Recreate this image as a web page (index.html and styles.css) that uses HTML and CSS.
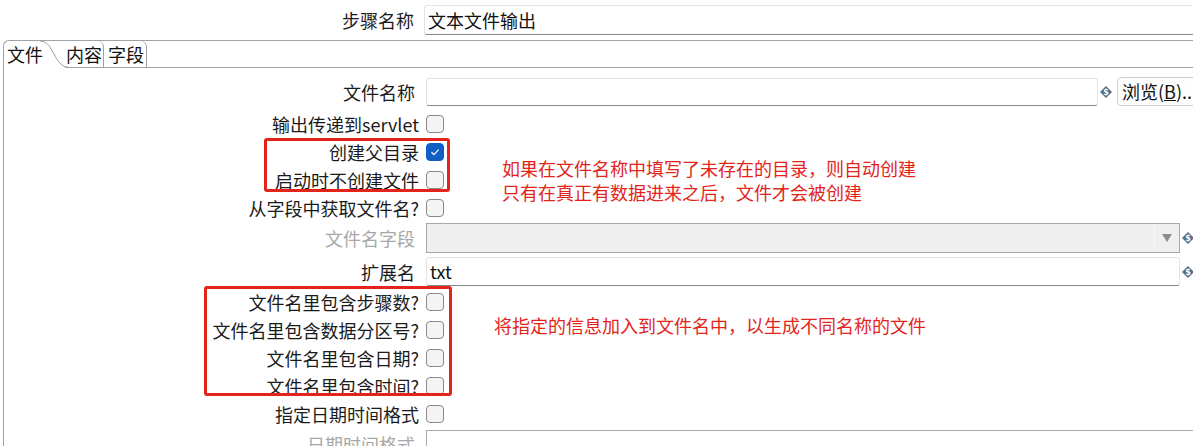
FILE: index.html
```html
<!DOCTYPE html>
<html lang="zh-CN">
<head>
    <meta charset="UTF-8">
    <title>文本文件输出</title>
    <link rel="stylesheet" href="styles.css">
</head>
<body>
    <div class="page">
        <div class="step-row">
            <div class="step-label">步骤名称</div>
            <div class="field step-field">文本文件输出</div>
        </div>

        <div class="panel">
            <div class="tabs">
                <div class="tab-active">文件</div>
                <svg class="tab-curve" width="30" height="27" viewBox="0 0 30 27">
                    <path d="M0 0 C8 0 11 8 14 13 C17 19 21 26.5 30 26.5" fill="none" stroke="#9c9c9c" stroke-width="1"/>
                </svg>
                <div class="tab tab-content">内容</div>
                <div class="tab tab-fields">字段</div>
                <div class="tab-fill"></div>
            </div>

            <div class="form">
                <div class="row row-file">
                    <div class="label label-field">文件名称</div>
                    <div class="control">
                        <div class="field grow"></div>
                        <svg class="var-icon" width="12" height="12" viewBox="0 0 12 12"><path d="M6 0 L12 6 L6 12 L0 6 Z" fill="#4d7190"/><text x="6" y="9" font-size="8" text-anchor="middle" fill="#fff">$</text></svg>
                        <div class="btn">浏览(<u>B</u>)...</div>
                    </div>
                </div>

                <div class="row row-servlet">
                    <div class="label">输出传递到servlet</div>
                    <div class="check"></div>
                </div>

                <!-- 创建目录 -->
                <div class="group">
                    <div class="group-rows">
                        <div class="row">
                            <div class="label">创建父目录</div>
                            <div class="check check-on">
                                <svg width="16" height="16" viewBox="0 0 16 16"><path d="M4.5 8.2 L7 10.6 L11.6 5.6" fill="none" stroke="#fff" stroke-width="1.2"/></svg>
                            </div>
                        </div>
                        <div class="row">
                            <div class="label">启动时不创建文件</div>
                            <div class="check"></div>
                        </div>
                    </div>
                    <div class="note note-create">如果在文件名称中填写了未存在的目录，则自动创建<br>只有在真正有数据进来之后，文件才会被创建</div>
                    <div class="mark mark-create"></div>
                </div>

                <div class="row">
                    <div class="label">从字段中获取文件名?</div>
                    <div class="check"></div>
                </div>

                <div class="row row-combo">
                    <div class="label label-field label-off">文件名字段</div>
                    <div class="control">
                        <div class="combo grow">
                            <div class="combo-arrow">
                                <svg width="10" height="8" viewBox="0 0 10 8"><path d="M0 0 L10 0 L5 8 Z" fill="#8c8c8c"/></svg>
                            </div>
                        </div>
                        <svg class="var-icon" width="12" height="12" viewBox="0 0 12 12"><path d="M6 0 L12 6 L6 12 L0 6 Z" fill="#4d7190"/><text x="6" y="9" font-size="8" text-anchor="middle" fill="#fff">$</text></svg>
                    </div>
                </div>

                <div class="row row-ext">
                    <div class="label label-field">扩展名</div>
                    <div class="control">
                        <div class="field grow">txt</div>
                        <svg class="var-icon" width="12" height="12" viewBox="0 0 12 12"><path d="M6 0 L12 6 L6 12 L0 6 Z" fill="#4d7190"/><text x="6" y="9" font-size="8" text-anchor="middle" fill="#fff">$</text></svg>
                    </div>
                </div>

                <!-- 文件名附加信息 -->
                <div class="group group-name">
                    <div class="group-rows">
                        <div class="row">
                            <div class="label">文件名里包含步骤数?</div>
                            <div class="check"></div>
                        </div>
                        <div class="row">
                            <div class="label">文件名里包含数据分区号?</div>
                            <div class="check"></div>
                        </div>
                        <div class="row">
                            <div class="label">文件名里包含日期?</div>
                            <div class="check"></div>
                        </div>
                        <div class="row">
                            <div class="label">文件名里包含时间?</div>
                            <div class="check"></div>
                        </div>
                    </div>
                    <div class="note note-name">将指定的信息加入到文件名中，以生成不同名称的文件</div>
                    <div class="mark mark-name"></div>
                </div>

                <div class="row">
                    <div class="label">指定日期时间格式</div>
                    <div class="check"></div>
                </div>

                <div class="row row-last">
                    <div class="label label-field label-off">日期时间格式</div>
                    <div class="control">
                        <div class="field field-off grow"></div>
                    </div>
                </div>
            </div>
        </div>
    </div>
</body>
</html>
```

FILE: styles.css
```css
html, body {
    margin: 0;
    background: #fff;
    overflow: hidden;
}
body {
    font-family: "Noto Sans CJK SC", "Noto Sans", sans-serif;
    font-size: 18px;
    color: #1b1b1b;
}
.page {
    width: 1210px;
}
.step-row {
    display: grid;
    grid-template-columns: 414px 1fr;
    column-gap: 10px;
    align-items: center;
    padding-top: 5px;
    height: 30px;
}
.step-label {
    text-align: right;
    line-height: 30px;
}
.field {
    box-sizing: border-box;
    height: 28px;
    border: 1px solid #e4e4e4;
    border-bottom-color: #888;
    border-radius: 3px;
    padding: 0 3px;
    line-height: 26px;
    background: #fff;
    color: #111;
}
.step-field {
    height: 30px;
    line-height: 28px;
}
.field-off {
    border-color: #ababab;
    border-radius: 0;
}
.panel {
    margin: 5px 0 0 3px;
    border-top: 1px solid #a2a2a2;
    border-left: 1px solid #a2a2a2;
    border-top-left-radius: 6px;
}
.tabs {
    display: flex;
    height: 27px;
}
.tab-active {
    padding-left: 3px;
    line-height: 26px;
    color: #111;
}
.tab-curve {
    flex: none;
    margin-left: -3px;
    overflow: visible;
}
.tab {
    line-height: 26px;
    border-right: 1px solid #a2a2a2;
    border-bottom: 1px solid #a2a2a2;
    border-top-right-radius: 6px;
    color: #111;
}
.tab-content {
    margin-left: -5px;
    padding: 0 1px;
}
.tab-fields {
    padding: 0 2px 0 4px;
}
.tab-fill {
    flex: 1;
    border-bottom: 1px solid #a2a2a2;
}
.form {
    padding-top: 9px;
}
.row {
    display: grid;
    grid-template-columns: 415px 773px;
    column-gap: 7px;
    align-items: center;
    height: 28px;
}
.label {
    text-align: right;
    line-height: 28px;
    white-space: nowrap;
}
.label-field {
    padding-right: 4px;
}
.label-off {
    color: #a8a8a8;
}
.control {
    display: flex;
    align-items: center;
}
.grow {
    flex: 1;
}
.row-servlet {
    margin-top: 5px;
}
.row-combo {
    height: 30px;
    margin-top: 1px;
}
.row-ext {
    height: 29px;
    margin-top: 4px;
}
.row-ext .field {
    height: 29px;
    line-height: 27px;
}
.row-last {
    margin-top: 2px;
}
.check {
    box-sizing: border-box;
    width: 18px;
    height: 18px;
    border: 1px solid #8a8a8a;
    border-radius: 4px;
    background: #f4f4f4;
}
.check-on {
    background: #0f5fc6;
    border-color: #0f5fc6;
}
.check-on svg {
    display: block;
    margin: 0;
}
.var-icon {
    flex: none;
    margin: 0 5px 0 2px;
}
.var-icon text {
    font-family: "DejaVu Sans", sans-serif;
    font-weight: bold;
}
.btn {
    box-sizing: border-box;
    width: 82px;
    height: 29px;
    border: 1px solid #d0d0d0;
    border-radius: 4px;
    background: #fdfdfd;
    padding-left: 4px;
    line-height: 27px;
    white-space: nowrap;
    overflow: hidden;
    color: #111;
}
.combo {
    box-sizing: border-box;
    height: 30px;
    border: 1px solid #a8a8a8;
    background: #efefef;
    display: flex;
    justify-content: flex-end;
}
.combo-arrow {
    width: 24px;
    display: flex;
    align-items: center;
    justify-content: center;
    border-left: 1px solid #f6f6f6;
}
.group {
    display: flex;
    position: relative;
}
.group-rows {
    flex: none;
}
.group-rows .row {
    grid-template-columns: 415px 18px;
}
.group-name {
    margin-top: 2px;
}
.note {
    color: #e3241b;
    line-height: 24px;
    white-space: nowrap;
}
.note-create {
    margin: 0 0 -10px 58px;
    padding-top: 18px;
}
.note-name {
    margin-left: 50px;
    padding-top: 25px;
}
.mark {
    position: absolute;
    box-sizing: border-box;
    border: 3px solid #e3241b;
    border-radius: 3px;
}
.mark-create {
    left: 260px;
    top: 0;
    width: 186px;
    height: 54px;
}
.mark-name {
    left: 200px;
    top: -2px;
    width: 248px;
    height: 110px;
}
```
